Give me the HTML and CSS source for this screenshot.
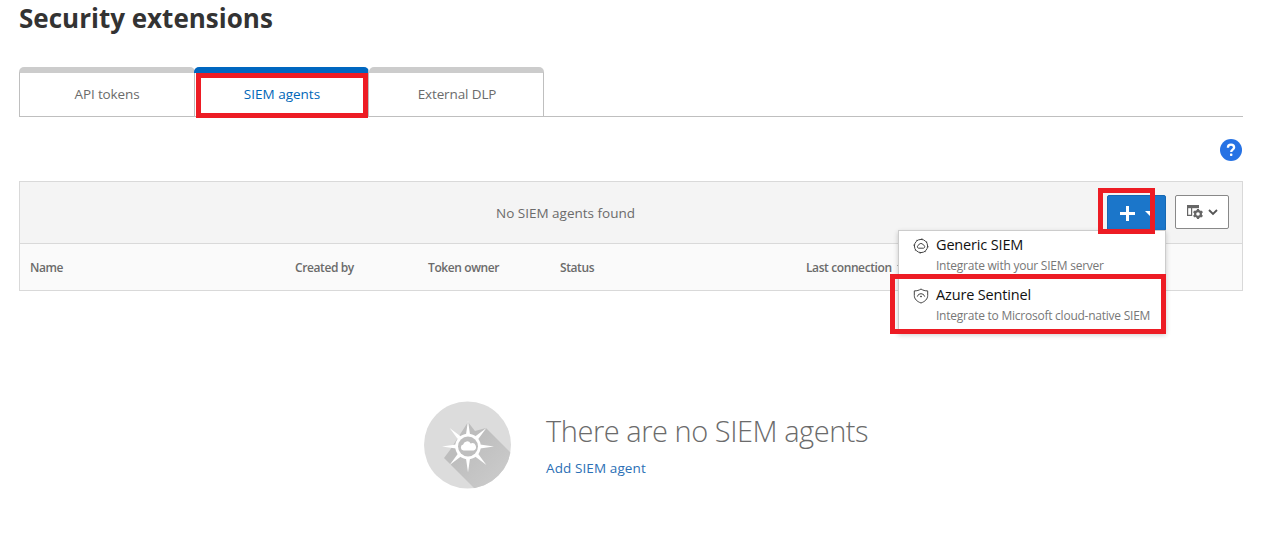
FILE: index.html
```html
<!DOCTYPE html>
<html lang="en">
<head>
<meta charset="utf-8">
<title>Security extensions</title>
<link rel="stylesheet" href="styles.css">
</head>
<body>
<main class="page">
  <h1 class="title">Security extensions</h1>
  <nav class="tabs">
    <a class="tab">API tokens</a>
    <a class="tab tab-active">SIEM agents</a>
    <a class="tab">External DLP</a>
  </nav>
  <div class="help-row">
    <svg class="help" viewBox="0 0 22 22"><circle cx="11" cy="11" r="11" fill="#2672e4"/><path d="M7.9 8.7C7.9 6.7 9.2 5.7 11 5.700s3.100 1 3.100 2.700c0 2.200-2.900 2.200-2.900 4.500" fill="none" stroke="#fff" stroke-width="2.3"/><rect x="10" y="14.500" width="2.400" height="2.400" rx=".6" fill="#fff"/></svg>
  </div>
  <section class="panel">
    <div class="toolbar">
      <span class="found">No SIEM agents found</span>
      <div class="actions">
        <button class="btn btn-add">
          <svg width="15" height="15" viewBox="0 0 15 15"><path d="M7.500 0v15M0 7.500h15" stroke="#fff" stroke-width="3"/></svg>
          <svg width="10" height="5" viewBox="0 0 10 5"><path d="M0 0h10L5 5z" fill="#fff"/></svg>
        </button>
        <button class="btn btn-columns">
          <svg width="17" height="15" viewBox="0 0 17 15"><path d="M0 0h12v3.200H0z" fill="#666"/><path d="M.6 3v7.400h4V3" fill="none" stroke="#666" stroke-width="1.2"/><circle cx="11" cy="9" r="2.900" fill="none" stroke="#666" stroke-width="2.200"/><path d="M11 3.900v2M11 12.100v2M6.600 6.500l1.600.9M13.800 10.600l1.600.9M6.600 11.500l1.600-.9M13.800 7.400l1.600-.9" stroke="#666" stroke-width="2.200"/></svg>
          <svg width="10" height="7" viewBox="0 0 10 7"><path d="M1 1l4 4 4-4" fill="none" stroke="#555" stroke-width="1.8"/></svg>
        </button>
      </div>
    </div>
    <div class="columns">
      <span>Name</span><span>Created by</span><span>Token owner</span><span>Status</span>
      <span class="sorted">Last connection<svg width="7" height="4" viewBox="0 0 7 4"><path d="M0 0h7L3.500 4z" fill="#777"/></svg></span>
    </div>
  </section>
  <section class="empty">
    <svg width="88" height="88" viewBox="0 0 88 88">
      <defs>
        <clipPath id="disc"><circle cx="43.500" cy="44" r="43.500"/></clipPath>
        <linearGradient id="shade" x1="0" y1="0" x2="1" y2="1"><stop offset=".3" stop-color="#bdbdbd"/><stop offset="1" stop-color="#d0d0d0"/></linearGradient>
      </defs>
      <circle cx="43.500" cy="44" r="43.500" fill="#dcdcdc"/>
      <path d="M44 21l7 9 11-3 30 30-36 36-36-36 6-8z" fill="url(#shade)" clip-path="url(#disc)"/>
      <g fill="#fff" transform="translate(44 45.500)">
        <path d="M-2-12L0-26 2-12zM-2 12L0 26 2 12zM-12-2L-26 0-12 2zM12-2L26 0 12 2z"/>
        <path transform="rotate(45)" d="M-2-12L0-26 2-12zM-2 12L0 26 2 12zM-12-2L-26 0-12 2zM12-2L26 0 12 2z"/>
        <circle r="12.800"/><circle r="10" fill="#bebebe"/>
        <path transform="scale(.88)" d="M-5 4.500a3.400 3.400 0 0 1-.5-6.700A4.600 4.600 0 0 1 3-3.500a4 4 0 0 1 3.400 8z"/>
      </g>
    </svg>
    <div>
      <h2 class="empty-title">There are no SIEM agents</h2>
      <a class="empty-link">Add SIEM agent</a>
    </div>
  </section>
  <div class="menu">
    <div class="item">
      <svg class="item-icon" width="16" height="16" viewBox="0 0 16 16" fill="none" stroke="#444"><circle cx="8" cy="8" r="6.600"/><circle cx="8" cy="8" r="7.200" stroke-width=".7" stroke-dasharray="1.500 4.155"/><path d="M5.500 10.200a1.500 1.500 0 0 1 0-2.900 2.600 2.600 0 0 1 4.900-.2 1.600 1.600 0 0 1 .2 3.100z"/></svg>
      <div><div class="name">Generic SIEM</div><div class="desc">Integrate with your SIEM server</div></div>
    </div>
    <div class="item">
      <svg class="item-icon" width="16" height="16" viewBox="0 0 16 16" fill="none" stroke="#444"><path d="M8 1C6 2.300 4 2.900 1.300 2.900v4.600c0 3.500 2.700 6 6.700 7.500 4-1.500 6.700-4 6.700-7.500V2.900C12 2.900 10 2.300 8 1z"/><path d="M4.300 8.600a3.800 3.800 0 0 1 7.400 0"/><circle cx="8" cy="8.500" r=".5" fill="#444"/></svg>
      <div><div class="name">Azure Sentinel</div><div class="desc">Integrate to Microsoft cloud-native SIEM</div></div>
    </div>
  </div>
  <div class="mark mark-tab"></div>
  <div class="mark mark-add"></div>
  <div class="mark mark-item"></div>
</main>
</body>
</html>
```
FILE: styles.css
```css
* { box-sizing: border-box; }
body { margin: 0; background: #fff; color: #6b6b6b; font-family: "Open Sans", "Noto Sans", sans-serif; font-size: 13.5px; }
.page { position: relative; height: 537px; padding: 0 19px; overflow: hidden; }
.title { margin: 0; height: 67px; font-size: 26px; line-height: 36px; font-weight: 700; color: #333; }
.tabs { display: flex; height: 50px; width: 1224px; border-bottom: 1px solid #bfbfbf; }
.tab { width: 175px; height: 50px; padding-left: 2px; border: 0 solid #bfbfbf; border-top: 6px solid #ccc; border-right-width: 1px; border-radius: 5px 5px 0 0; line-height: 42px; text-align: center; letter-spacing: -0.12px; }
.tab:first-child { width: 176px; margin-right: -1px; padding-left: 0; border-left-width: 1px; }
.tab-active { border-top-color: #0067c0; color: #0067b8; letter-spacing: 0; }
.help-row { display: flex; justify-content: flex-end; width: 1224px; height: 64px; padding: 22px 1px 0 0; }
.help { width: 22px; height: 22px; }
.panel { width: 1224px; height: 110px; border: 1px solid #d9d9d9; }
.toolbar { display: flex; height: 62px; background: #f4f4f4; border-bottom: 1px solid #d9d9d9; }
.found { width: 1091px; text-align: center; line-height: 63px; }
.actions { display: flex; flex: none; gap: 9px; margin-left: -4px; padding-top: 13px; }
.btn { display: flex; align-items: center; padding: 0; border-radius: 2px; }
.btn-add { width: 59px; height: 36px; border: 1px solid #1668b3; background: #1b76ca; gap: 10px; padding-left: 12px; }
.btn-columns { width: 54px; height: 34px; border: 1px solid #888; background: #fff; gap: 4px; padding-left: 11px; }
.columns { display: grid; grid-template-columns: 265px 133px 132px 246px 1fr; padding-left: 10px; height: 46px; line-height: 48px; font-size: 12px; font-weight: 600; letter-spacing: -0.4px; background: #fafafa; }
.sorted svg { margin: 0 0 3px 5px; }
.empty { display: flex; padding: 110px 0 0 405px; gap: 34px; }
.empty-title { margin: 12px 0 10px; font-size: 29px; line-height: 36px; font-weight: 300; letter-spacing: -0.46px; }
.empty-link { color: #2b6fb5; letter-spacing: 0.1px; }
.menu { position: absolute; left: 898px; top: 230px; width: 268px; height: 103px; background: #fff; border: 1px solid #ccc; box-shadow: 0 2px 5px rgba(0, 0, 0, 0.2); padding-top: 4px; }
.item { display: flex; height: 50px; gap: 7px; padding-left: 14px; }
.item-icon { margin-top: 3px; }
.name { color: #111; font-size: 14.5px; line-height: 20px; letter-spacing: -0.16px; }
.desc { font-size: 12px; line-height: 22px; letter-spacing: -0.24px; color: #777; }
.mark { position: absolute; border: 5px solid #ed1c24; }
.mark-tab { left: 196px; top: 73px; width: 172px; height: 45px; }
.mark-add { left: 1098px; top: 188px; width: 57px; height: 46px; }
.mark-item { left: 890px; top: 274px; width: 276px; height: 60px; }
```
